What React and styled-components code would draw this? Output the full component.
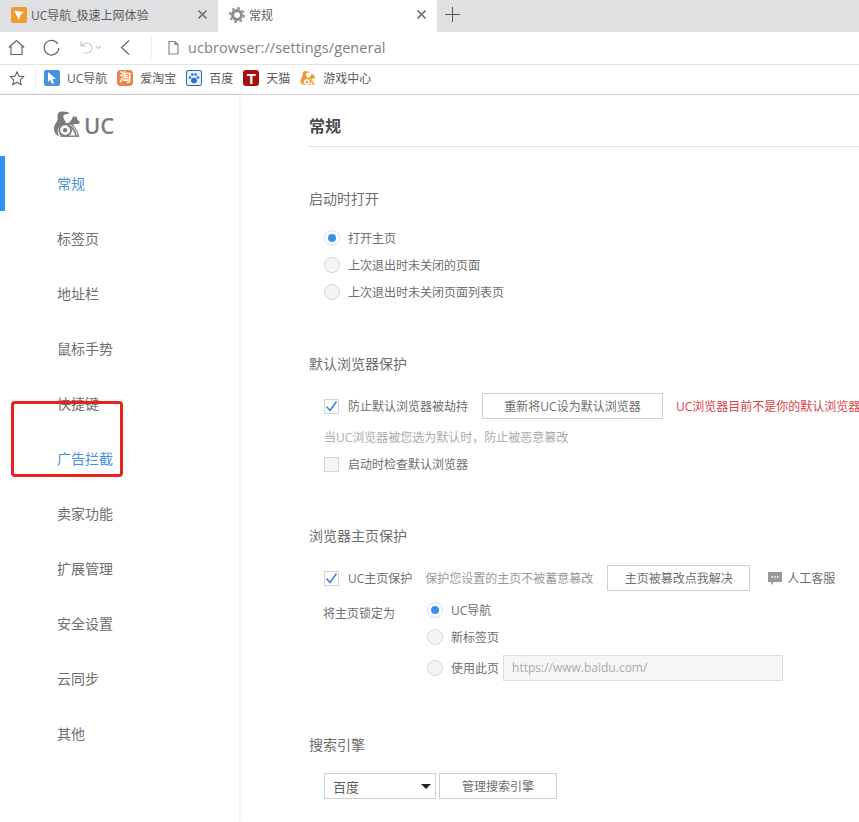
import React from "react";
import styled, { createGlobalStyle } from "styled-components";

const Global = createGlobalStyle`
  html, body { margin: 0; padding: 0; background: #fff; }
  * { box-sizing: border-box; }
  body { font-family: "Open Sans", "Noto Sans CJK SC", sans-serif; color: #666; }
`;
const Page = styled.div`position: relative; width: 859px; height: 822px; overflow: hidden; background: #fff; display: flex; flex-direction: column;`;
const TabBar = styled.div`display: flex; height: 32px; background: #dfe0e2; flex: none;`;
const Tab = styled.div`
  width: ${p => p.$w}px; display: flex; align-items: center; padding: 0 11px 3px; gap: 4px;
  background: ${p => (p.$active ? "#fff" : "#dfe0e2")}; font-size: 12px; color: #5c5c5c;
`;
const TabTitle = styled.span`flex: 1; white-space: nowrap;`;
const Close = styled.svg`width: 9px; height: 9px; stroke: #777; stroke-width: 1.7; fill: none; flex: none;`;
const Plus = styled.svg`width: 15px; height: 15px; margin: 0 0 3px 8px; align-self: center; stroke: #555; stroke-width: 1; fill: none;`;
const AddressBar = styled.div`display: flex; align-items: center; height: 33px; flex: none; border-bottom: 1px solid #e4e4e4; padding: 0 0 2px 8px;`;
const ToolIcon = styled.svg`width: ${p => p.$w || 17}px; height: 17px; margin-right: ${p => p.$mr}px; fill: none; stroke: ${p => p.$c || "#666"}; stroke-width: 1.2; flex: none;`;
const VSep = styled.div`width: 1px; height: 22px; background: #ececec; margin-right: ${p => p.$mr}px;`;
const Url = styled.span`font-size: 14.5px; color: #808080; margin-left: 9px; letter-spacing: 0.1px;`;
const BookmarkBar = styled.div`display: flex; align-items: center; height: 30px; flex: none; border-bottom: 1px solid #cfcfcf; padding: 0 0 3px 9px;`;
const Bookmark = styled.div`display: flex; align-items: center; gap: 7px; font-size: 12px; color: #5c5c5c; margin-right: 10px; white-space: nowrap;`;
const Fav = styled.span`
  width: 16px; height: 16px; flex: none; display: flex; align-items: center; justify-content: center;
  border-radius: ${p => p.$r ?? 2}px; color: #fff; font-size: 12px; font-weight: 700; line-height: 1;
  background: ${p => p.$bg}; border: ${p => p.$border || "none"};
  font-family: ${p => (p.$serifless ? '"Liberation Sans", sans-serif' : "inherit")};
`;
const Body = styled.div`display: flex; flex: 1; min-height: 0;`;
const Sidebar = styled.nav`width: 239px; flex: none; box-shadow: 1px 0 4px rgba(0,0,0,.09); background: #fff;`;
const Logo = styled.div`display: flex; align-items: center; height: 61px; padding: 0 0 2px 53px; gap: 3px;`;
const LogoText = styled.span`font-family: "Open Sans", sans-serif; font-size: 22px; font-weight: 600; color: #7b7b7b;`;
const NavList = styled.div`margin-top: 0;`;
const NavItem = styled.div`
  height: 55px; display: flex; align-items: center; padding: 0 0 2px ${p => (p.$bar ? 52 : 57)}px; font-size: 14px;
  color: ${p => (p.$blue ? "#4a90e2" : "#6e6e6e")};
  border-left: ${p => (p.$bar ? "5px solid #2f93f5" : "none")};
`;
const Main = styled.main`flex: 1; padding: 20px 0 0 70px; min-width: 0;`;
const PageTitle = styled.h1`margin: 0; font-size: 16px; line-height: 22px; font-weight: 700; color: #4a4a4a; padding-bottom: 9px; border-bottom: 1px solid #e2e2e2;`;
const Section = styled.section`margin-top: ${p => p.$mt || 49}px;`;
const Heading = styled.h2`margin: 0; font-size: 14px; line-height: 20px; font-weight: 400; color: #6e6e6e;`;
const Options = styled.div`margin: ${p => p.$mt ?? 15}px 0 0 ${p => p.$ml ?? 15}px;`;
const OptionRow = styled.div`display: flex; align-items: center; height: ${p => p.$h || 27}px; font-size: 12px; color: #6e6e6e; white-space: nowrap;`;
const Radio = styled.span`
  width: 16px; height: 16px; border-radius: 50%; flex: none; margin-right: 8px; position: relative;
  border: 1px solid ${p => (p.$on ? "#cfe0f5" : "#d6d6d6")}; background: ${p => (p.$on ? "#fff" : "#f5f5f5")};
  &::after { content: ""; display: ${p => (p.$on ? "block" : "none")}; position: absolute; inset: 3px; border-radius: 50%; background: #3d8fee; }
`;
const Check = styled.span`
  width: 15px; height: 15px; flex: none; margin-right: 9px; display: flex; align-items: center; justify-content: center;
  border: 1px solid #d6d6d6; background: ${p => (p.$on ? "#fff" : "#f5f5f5")};
`;
const Tick = styled.svg`width: 13px; height: 13px; fill: none; stroke: #3d86e2; stroke-width: 1.6;`;
const GhostButton = styled.button`
  height: ${p => p.$h || 26}px; width: ${p => p.$w}px; margin-left: ${p => p.$ml || 0}px; flex: none; padding: 0;
  border: 1px solid #cfcfcf; background: #fff; font: inherit; font-size: 12px; color: #6e6e6e;
`;
const Warn = styled.span`color: #d8434a; margin-left: 13px; font-size: 12px;`;
const Hint = styled.div`font-size: 12px; color: #aaa; height: 30px; padding-top: 2px; display: flex; align-items: center;`;
const Muted = styled.span`color: #999; margin-left: 13px;`;
const Service = styled.span`display: flex; align-items: center; gap: 5px; margin-left: 18px;`;
const Lock = styled.div`display: flex; margin: 3px 0 0 14px;`;
const LockLabel = styled.div`width: 89px; font-size: 12px; line-height: 17px; color: #6e6e6e; padding-top: 9px; flex: none;`;
const LockInput = styled.input`
  width: 280px; height: 26px; border: 1px solid #ddd; background: #f6f6f6; margin-left: 4px; padding: 0 8px;
  font: inherit; font-size: 12px; &::placeholder { color: #aaa; }
`;
const SearchRow = styled.div`display: flex; margin: 18px 0 0 15px; font-size: 12px;`;
const Select = styled.div`
  width: 112px; height: 26px; border: 1px solid #cfcfcf; display: flex; align-items: center; justify-content: space-between;
  padding: 0 4px 0 8px; font-size: 13px; color: #5c5c5c;
  &::after { content: ""; border: 5px solid transparent; border-top: 5px solid #222; border-bottom: 0; }
`;
const Annotation = styled.div`position: absolute; left: 11px; top: 401px; width: 112px; height: 76px; border: 3px solid #e8211d; border-radius: 4px; pointer-events: none;`;

const X = () => <Close viewBox="0 0 9 9"><path d="M.5.5l8 8M8.500.5l-8 8" /></Close>;
const UCFav = () => (
  <svg width="16" height="16" viewBox="0 0 16 16"><rect width="16" height="16" rx="2" fill="#f29a2e" /><path d="M3 3.500l10 1.500-3.500 3L8 13z" fill="#fff" /></svg>
);
const Gear = () => (
  <svg width="16" height="16" viewBox="0 0 16 16" fill="none" stroke="#8c8c8c">
    <circle cx="8" cy="8" r="7" strokeWidth="1.800" strokeDasharray="2.700 2.800" />
    <circle cx="8" cy="8" r="4.500" strokeWidth="3" />
  </svg>
);
const Squirrel = ({ size = 30, color = "#7b7b7b" }) => (
  <svg width={size} height={size * 28 / 30} viewBox="0 0 30 28">
    <path d="M7 1C11 0 17 1 18 3 14 3 11 4 11 6c0 3 3 5 3 8-5 0-9 3-9 8 0 2 1 4 2 5-4-1-6-4-6-8 0-5 4-7 4-11 0-3-1-5 2-7z" fill={color} />
    <circle cx="13" cy="20.500" r="6.300" fill="none" stroke={color} strokeWidth="2" />
    <circle cx="13" cy="20.500" r="2.300" fill={color} />
    <path d="M17 13l3-4 2-4 2 2 1-2.500 1 4.500 3 3-2 2h-4l-3 2z" fill={color} />
    <path d="M14 12.500c7-.5 12 6 14 14.500h-4c-1-5-4-9-7-10z" fill={color} />
    <path d="M18 15c4 1 7 6 8 12" fill="none" stroke="#fff" strokeWidth="1" />
    <path d="M8 27h20" stroke={color} strokeWidth="1.500" />
  </svg>
);
const Chat = () => (
  <svg width="14" height="13" viewBox="0 0 14 13"><path d="M0 0h14v10H6l-3 3v-3H0z" fill="#999" /><path d="M3.500 5h1.500M6.300 5h1.500M9 5h1.500" stroke="#fff" strokeWidth="1.300" /></svg>
);
const nav = ["常规", "标签页", "地址栏", "鼠标手势", "快捷键", "广告拦截", "卖家功能", "扩展管理", "安全设置", "云同步", "其他"];
const TickIcon = () => <Tick viewBox="0 0 13 13"><path d="M1.500 6.500l3.500 4 6.500-9" /></Tick>;

export default function App() {
  return (
    <Page>
      <Global />
      <TabBar>
        <Tab $w={218}><UCFav /><TabTitle>UC导航_极速上网体验</TabTitle><X /></Tab>
        <Tab $w={219} $active><Gear /><TabTitle>常规</TabTitle><X /></Tab>
        <Plus viewBox="0 0 15 15"><path d="M0 7.500h15M7.500 0v15" /></Plus>
      </TabBar>
      <AddressBar>
        <ToolIcon $mr={18} viewBox="0 0 17 17"><path d="M.8 8.500L8.500 1.500l7.700 7M3 7v8.500h11V7" /></ToolIcon>
        <ToolIcon $mr={18} viewBox="0 0 17 17"><path d="M14.800 5A7.300 7.300 0 1 0 15.800 9" /></ToolIcon>
        <ToolIcon $w={24} $mr={16} $c="#c9c9c9" viewBox="0 0 24 17"><path d="M3 2v5h5M3 7c2-2 4-3 6-3 3 0 5 2.500 5 5s-2 5-5 5H5M18 7l2.500 2.500L23 7" /></ToolIcon>
        <ToolIcon $mr={16} viewBox="0 0 17 17"><path d="M11 1.500L3.500 8.500l7.500 7" /></ToolIcon>
        <VSep $mr={16} />
        <ToolIcon $w={11} $mr={0} $c="#888" viewBox="0 0 11 17"><path d="M1 2.500h6l3 3v9.500H1zM7 2.500v3h3" /></ToolIcon>
        <Url>ucbrowser://settings/general</Url>
      </AddressBar>
      <BookmarkBar>
        <ToolIcon $w={16} $mr={10} viewBox="0 0 17 17"><path d="M8.500 1.500l2.100 4.500 4.900.6-3.600 3.400 1 4.900-4.400-2.500-4.400 2.500 1-4.900L1.500 6.600l4.900-.6z" /></ToolIcon>
        <VSep $mr={8} />
        <Bookmark><Fav $bg="#4a90e6"><svg width="10" height="12" viewBox="0 0 10 12"><path d="M1 0l8 7H5.500L7 11l-2 1-1.500-4L1 10z" fill="#fff" /></svg></Fav>UC导航</Bookmark>
        <Bookmark><Fav $bg="#ee7f45" $r={4}>淘</Fav>爱淘宝</Bookmark>
        <Bookmark><Fav $bg="#e8f0fb" $border="1px solid #3368b8"><svg width="12" height="12" viewBox="0 0 12 12" fill="#2f6fd0"><ellipse cx="6" cy="8.500" rx="3" ry="2.800" /><circle cx="2" cy="5.500" r="1.300" /><circle cx="10" cy="5.500" r="1.300" /><circle cx="4.300" cy="2.500" r="1.300" /><circle cx="7.700" cy="2.500" r="1.300" /></svg></Fav>百度</Bookmark>
        <Bookmark><Fav $bg="#a80d10" $r={3} $serifless style={{ fontSize: 15 }}>T</Fav>天猫</Bookmark>
        <Bookmark><Fav $bg="transparent"><Squirrel size={16} color="#ef9a2d" /></Fav>游戏中心</Bookmark>
      </BookmarkBar>
      <Body>
        <Sidebar>
          <Logo><Squirrel size={28} /><LogoText>UC</LogoText></Logo>
          <NavList>
            {nav.map((n, i) => (
              <NavItem key={n} $bar={i === 0} $blue={i === 0 || i === 5}>{n}</NavItem>
            ))}
          </NavList>
        </Sidebar>
        <Main>
          <PageTitle>常规</PageTitle>
          <Section $mt={42}>
            <Heading>启动时打开</Heading>
            <Options>
              <OptionRow><Radio $on />打开主页</OptionRow>
              <OptionRow><Radio />上次退出时未关闭的页面</OptionRow>
              <OptionRow><Radio />上次退出时未关闭页面列表页</OptionRow>
            </Options>
          </Section>
          <Section>
            <Heading>默认浏览器保护</Heading>
            <Options $mt={17}>
              <OptionRow $h={30}>
                <Check $on><TickIcon /></Check>防止默认浏览器被劫持
                <GhostButton $w={181} $ml={14}>重新将UC设为默认浏览器</GhostButton>
                <Warn>UC浏览器目前不是你的默认浏览器</Warn>
              </OptionRow>
              <Hint>当UC浏览器被您选为默认时，防止被恶意篡改</Hint>
              <OptionRow $h={26}><Check />启动时检查默认浏览器</OptionRow>
            </Options>
          </Section>
          <Section>
            <Heading>浏览器主页保护</Heading>
            <Options $mt={17}>
              <OptionRow $h={30}>
                <Check $on><TickIcon /></Check>UC主页保护
                <Muted>保护您设置的主页不被蓄意篡改</Muted>
                <GhostButton $w={143} $ml={14}>主页被篡改点我解决</GhostButton>
                <Service><Chat />人工客服</Service>
              </OptionRow>
            </Options>
            <Lock>
              <LockLabel>将主页锁定为</LockLabel>
              <Options $mt={0} $ml={15}>
                <OptionRow><Radio $on />UC导航</OptionRow>
                <OptionRow><Radio />新标签页</OptionRow>
                <OptionRow $h={35}><Radio />使用此页<LockInput placeholder="https://www.baidu.com/" readOnly /></OptionRow>
              </Options>
            </Lock>
          </Section>
          <Section $mt={50}>
            <Heading>搜索引擎</Heading>
            <SearchRow>
              <Select>百度</Select>
              <GhostButton $w={118} $ml={3}>管理搜索引擎</GhostButton>
            </SearchRow>
          </Section>
        </Main>
      </Body>
      <Annotation />
    </Page>
  );
}
